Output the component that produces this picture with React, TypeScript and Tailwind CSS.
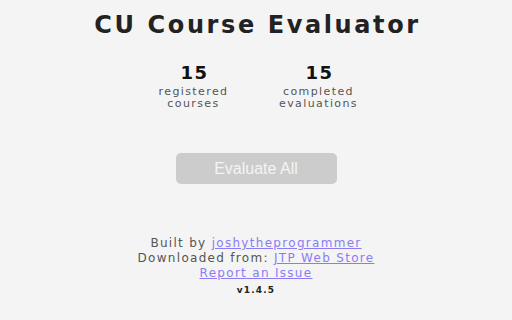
import React from "react";

export default function App() {
  const font = { fontFamily: '"DejaVu Sans", "Noto Sans", sans-serif' };
  return (
    <div className="w-[512px] h-[320px] bg-[#f4f4f4] flex flex-col items-center overflow-hidden" style={font}>
      <h1 className="mt-[10px] text-[24px] leading-[30px] font-bold text-[#222] tracking-[2.6px] pl-[3px]">CU Course Evaluator</h1>
      <div className="mt-[23px] flex gap-[35px]">
        <div className="flex flex-col items-center w-[90px]">
          <div className="text-[18px] leading-[20px] font-black text-[#111] tracking-[1.5px] pl-[2px]">15</div>
          <div className="mt-[3px] text-[11px] leading-[12px] text-[#555] text-center tracking-[1.4px]">registered<br />courses</div>
        </div>
        <div className="flex flex-col items-center w-[90px]">
          <div className="text-[18px] leading-[20px] font-black text-[#111] tracking-[1.5px] pl-[2px]">15</div>
          <div className="mt-[3px] text-[11px] leading-[12px] text-[#555] text-center tracking-[1.4px]">completed<br />evaluations</div>
        </div>
      </div>
      <button
        disabled
        className="mt-[43px] w-[161px] h-[31px] rounded-[5px] bg-[#cccccc] text-[#f4f4f4] text-[16px]"
        style={{ fontFamily: '"Liberation Sans", Arial, sans-serif' }}
      >
        Evaluate All
      </button>
      <div className="mt-[52px] flex flex-col items-center text-[12px] leading-[15px] text-[#555] tracking-[1.3px]">
        <div>Built by <a className="text-[#8b7cf6] underline">joshytheprogrammer</a></div>
        <div>Downloaded from: <a className="text-[#8b7cf6] underline">JTP Web Store</a></div>
        <div><a className="text-[#8b7cf6] underline">Report an Issue</a></div>
        <div className="mt-[2px] text-[9px] font-bold text-[#222] tracking-[1.2px]">v1.4.5</div>
      </div>
    </div>
  );
}
